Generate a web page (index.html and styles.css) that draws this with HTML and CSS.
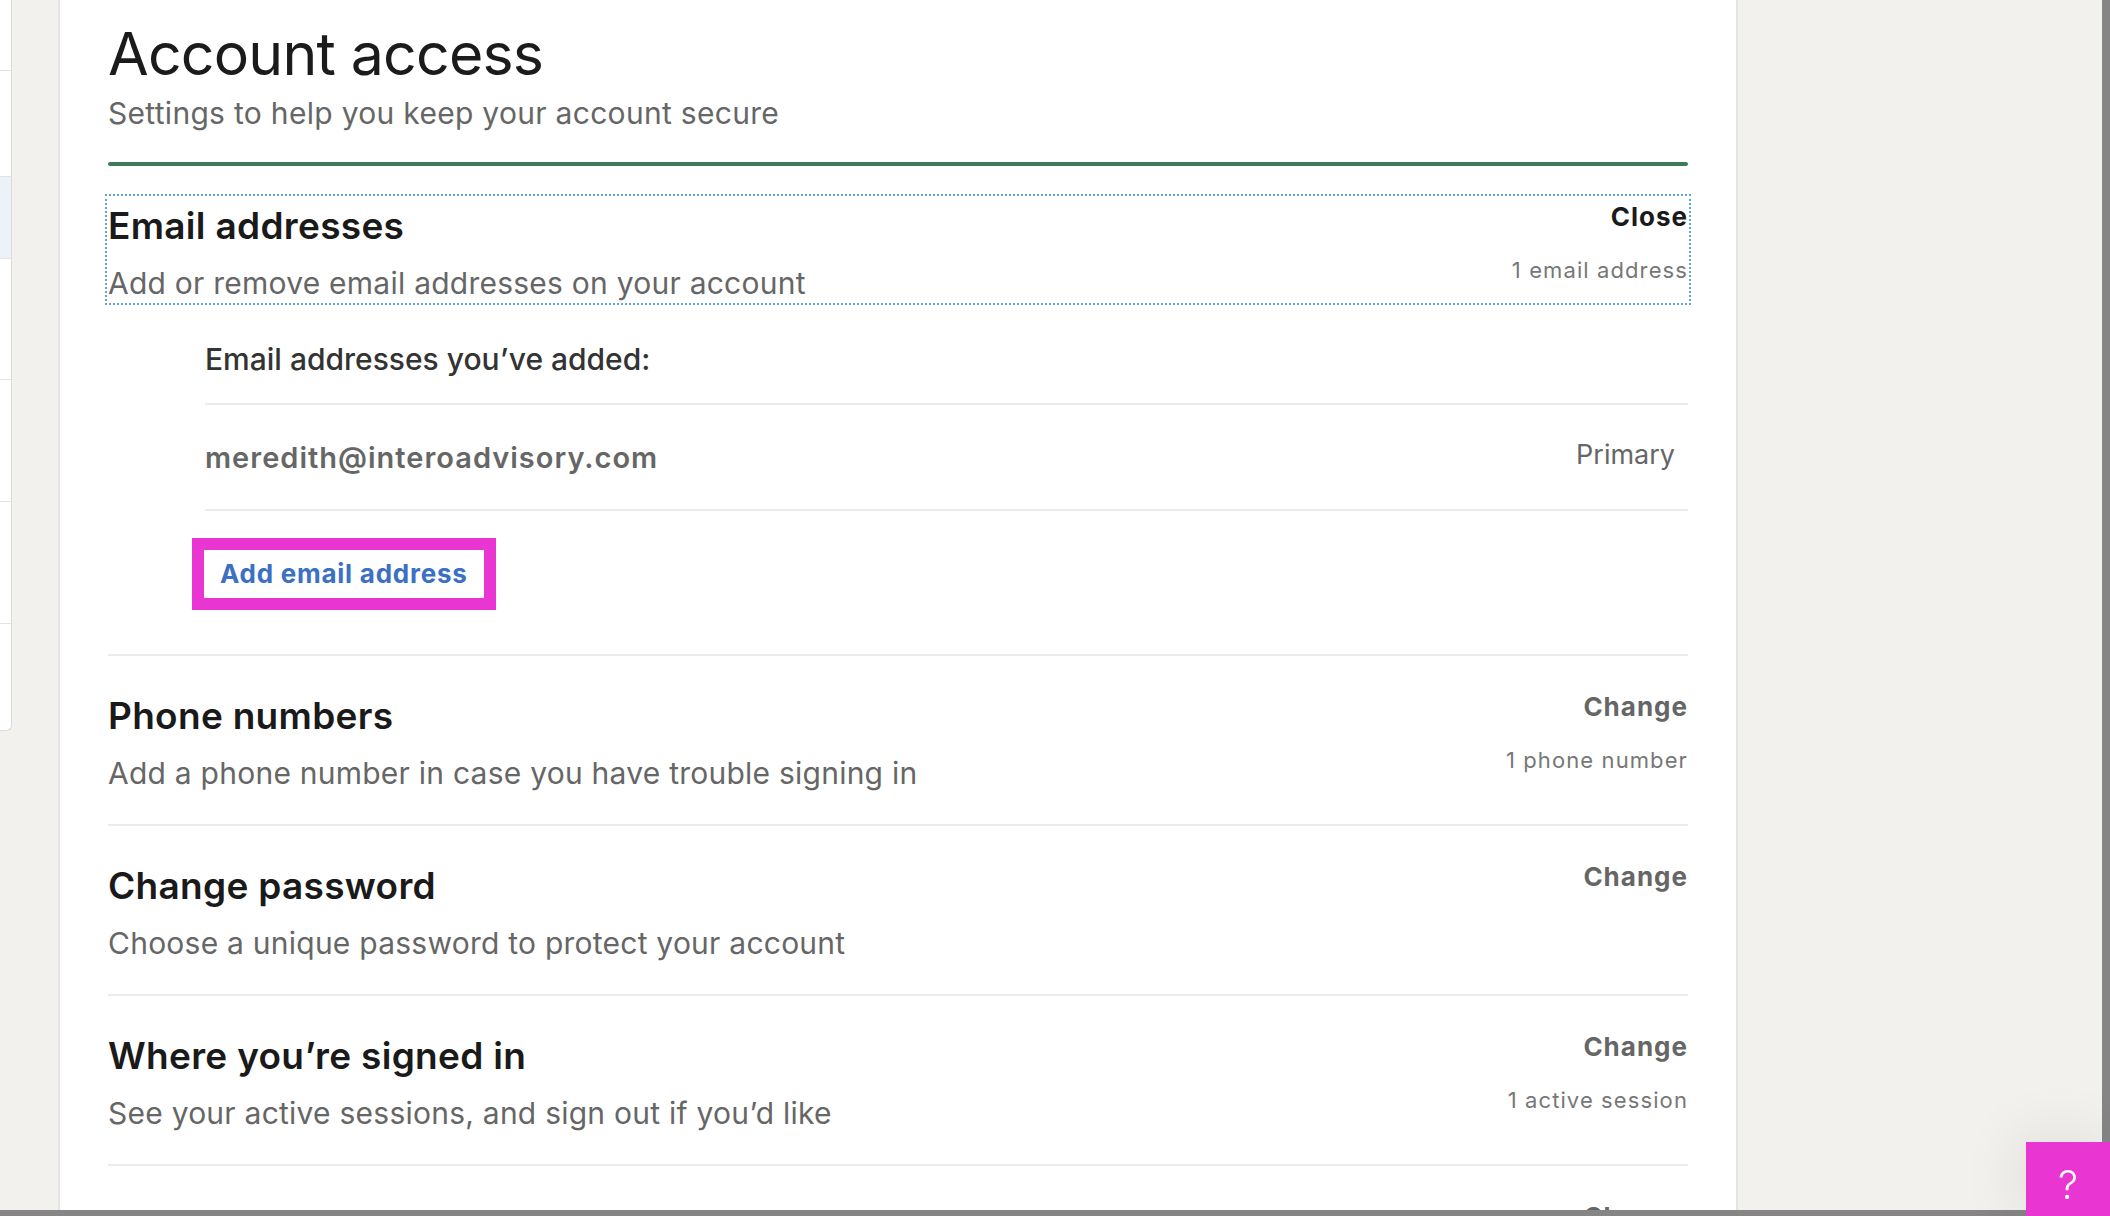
FILE: index.html
```html
<!DOCTYPE html>
<html lang="en">
<head>
<meta charset="utf-8">
<title>Account access</title>
<link rel="stylesheet" href="styles.css">
</head>
<body>
<div class="frame">
  <div class="viewport">
    <div class="page">
      <aside class="nav-stub">
        <div class="nav-item n1"></div>
        <div class="nav-item n2"></div>
        <div class="nav-item n3 active"></div>
        <div class="nav-item n4"></div>
        <div class="nav-item n5"></div>
        <div class="nav-item n6"></div>
        <div class="nav-item n7"></div>
      </aside>
      <main class="card">
        <header class="page-head">
          <h1 class="page-title">Account access</h1>
          <p class="page-subtitle">Settings to help you keep your account secure</p>
        </header>
        <div class="accent-rule"></div>

        <section class="setting open">
          <div class="setting-head">
            <div class="setting-text">
              <h2 class="setting-title">Email addresses</h2>
              <p class="setting-desc">Add or remove email addresses on your account</p>
            </div>
            <div class="setting-meta">
              <span class="action">Close</span>
              <span class="count">1 email address</span>
            </div>
          </div>
          <div class="email-panel">
            <div class="panel-label">Email addresses you’ve added:</div>
            <ul class="email-list">
              <li class="email-row">
                <span class="email-addr">meredith@interoadvisory.com</span>
                <span class="email-tag">Primary</span>
              </li>
            </ul>
            <div class="add-wrap"><span class="add-btn">Add email address</span></div>
          </div>
        </section>

        <section class="setting">
          <div class="setting-head">
            <div class="setting-text">
              <h2 class="setting-title">Phone numbers</h2>
              <p class="setting-desc">Add a phone number in case you have trouble signing in</p>
            </div>
            <div class="setting-meta">
              <span class="action">Change</span>
              <span class="count">1 phone number</span>
            </div>
          </div>
        </section>

        <section class="setting">
          <div class="setting-head">
            <div class="setting-text">
              <h2 class="setting-title">Change password</h2>
              <p class="setting-desc">Choose a unique password to protect your account</p>
            </div>
            <div class="setting-meta">
              <span class="action">Change</span>
            </div>
          </div>
        </section>

        <section class="setting">
          <div class="setting-head">
            <div class="setting-text">
              <h2 class="setting-title">Where you’re signed in</h2>
              <p class="setting-desc">See your active sessions, and sign out if you’d like</p>
            </div>
            <div class="setting-meta">
              <span class="action">Change</span>
              <span class="count">1 active session</span>
            </div>
          </div>
        </section>

        <section class="setting">
          <div class="setting-head">
            <div class="setting-text">
              <h2 class="setting-title">Devices that remember your password</h2>
              <p class="setting-desc">Review devices that remember your password</p>
            </div>
            <div class="setting-meta">
              <span class="action">Change</span>
            </div>
          </div>
        </section>
      </main>
    </div>
    <div class="vscroll"></div>
  </div>
  <div class="hbar"></div>
</div>
<a class="help" href="#">?</a>
</body>
</html>
```
FILE: styles.css
```css
html, body {
  margin: 0;
  padding: 0;
  height: 100%;
}

body {
  font-family: Inter, "Noto Sans", "Liberation Sans", sans-serif;
  background: #f2f1ee;
  overflow: hidden;
  color: #1d1d1d;
}

.frame {
  display: flex;
  flex-direction: column;
  height: 1216px;
}

.viewport {
  flex: 1;
  display: flex;
  min-height: 0;
  overflow: hidden;
}

.page {
  flex: 1;
  display: flex;
  align-items: flex-start;
  overflow: hidden;
}

.vscroll {
  width: 8px;
  background: #858585;
}

.hbar {
  height: 6px;
  background: #858585;
}

/* left navigation stub */
.nav-stub {
  width: 11px;
  height: 730px;
  flex-shrink: 0;
  background: #fff;
  border-right: 1px solid #dcdcdc;
  border-bottom: 1px solid #dcdcdc;
  border-bottom-right-radius: 6px;
  display: flex;
  flex-direction: column;
}

.nav-item {
  border-bottom: 1px solid #e3e3e3;
  flex-shrink: 0;
}

.n1 { height: 70px; }
.n2 { height: 105px; }
.n3 { height: 81px; }
.n4 { height: 120px; }
.n5 { height: 121px; }
.n6 { height: 121px; }
.n7 { flex: 1; border-bottom: 0; }

.nav-item.active {
  background: #edf2f8;
}

/* main card */
.card {
  margin-left: 46px;
  width: 1580px;
  flex-shrink: 0;
  align-self: stretch;
  background: #fff;
  border-left: 2px solid #e4e4e4;
  border-right: 2px solid #e4e4e4;
  padding: 18px 48px 0;
}

.page-title {
  margin: 0;
  font-size: 59px;
  font-weight: 400;
  line-height: 72px;
  letter-spacing: -0.8px;
  color: #1b1b1b;
}

.page-subtitle {
  margin: 3px 0 0;
  font-size: 30px;
  line-height: 40px;
  letter-spacing: 0.3px;
  color: #666;
}

.accent-rule {
  height: 4px;
  margin-top: 29px;
  background: #3e7b58;
  border-radius: 2px;
}

.setting {
  padding: 31px 0 32px;
  border-bottom: 2px solid #ebebeb;
}

.setting.open {
  padding-bottom: 44px;
}

.setting-head {
  height: 105px;
  box-sizing: border-box;
  padding-top: 5px;
  display: flex;
  justify-content: space-between;
}

.setting.open .setting-head {
  outline: 2px dotted #5ea2dd;
  outline-offset: 1px;
}

.setting-title {
  margin: 0;
  font-size: 37px;
  font-weight: 600;
  line-height: 48px;
  letter-spacing: 0.3px;
  color: #1a1a1a;
}

.setting-desc {
  margin: 14px 0 0;
  font-size: 30px;
  line-height: 38px;
  letter-spacing: 0.24px;
  color: #666;
}

.setting-meta {
  display: flex;
  flex-direction: column;
  align-items: flex-end;
}

.action {
  font-size: 26px;
  font-weight: 700;
  line-height: 30px;
  letter-spacing: 1px;
  color: #666;
}

.setting.open .action {
  color: #1a1a1a;
}

.count {
  margin-top: 24px;
  font-size: 22px;
  line-height: 28px;
  letter-spacing: 1.1px;
  color: #777;
}

/* expanded email panel */
.email-panel {
  margin-top: 37px;
  padding-left: 97px;
}

.panel-label {
  font-size: 30px;
  font-weight: 500;
  line-height: 40px;
  color: #333;
  padding-bottom: 24px;
}

.email-list {
  list-style: none;
  margin: 0;
  padding: 0;
  border-top: 2px solid #ebebeb;
  border-bottom: 2px solid #ebebeb;
}

.email-row {
  height: 104px;
  display: flex;
  align-items: center;
  justify-content: space-between;
  padding-right: 13px;
}

.email-addr {
  font-size: 29px;
  font-weight: 600;
  letter-spacing: 1px;
  color: #666;
}

.email-tag {
  font-size: 27px;
  color: #666;
  margin-top: -6px;
}

.add-wrap {
  margin-top: 27px;
  margin-left: -13px;
}

.add-btn {
  display: inline-block;
  border: 12px solid #e935d1;
  padding: 0 16px 0 16px;
  font-size: 26px;
  font-weight: 700;
  line-height: 48px;
  letter-spacing: 0.75px;
  color: #3b70c3;
  background: #fff;
}

/* help button */
.help {
  position: fixed;
  right: 0;
  bottom: -10px;
  width: 84px;
  height: 84px;
  display: flex;
  align-items: center;
  justify-content: center;
  background: #e935d1;
  color: #fff;
  font-size: 40px;
  font-weight: 300;
  text-decoration: none;
  box-shadow: -8px -8px 60px rgba(0, 0, 0, 0.08);
}
```
